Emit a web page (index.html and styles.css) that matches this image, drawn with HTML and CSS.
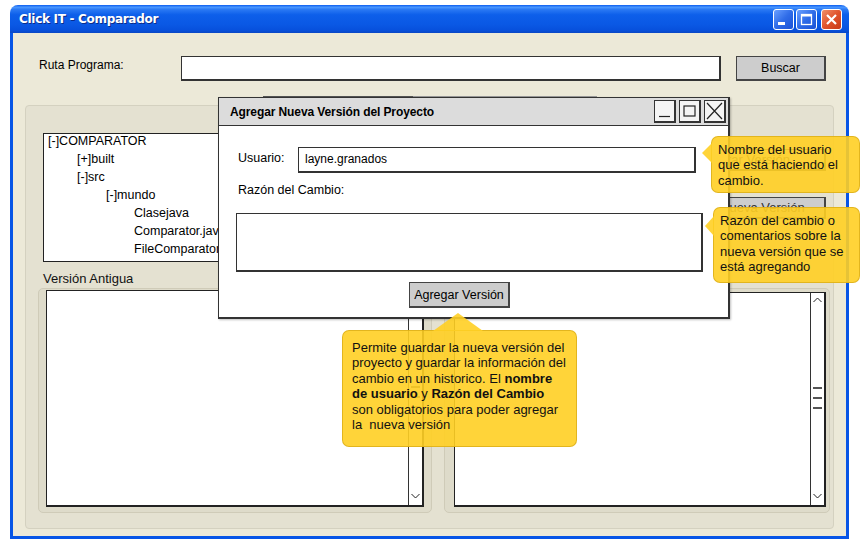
FILE: index.html
```html
<!DOCTYPE html>
<html lang="es">
<head>
    <meta charset="UTF-8">
    <title>Click IT - Comparador</title>
    <link rel="stylesheet" href="styles.css">
</head>
<body>
    <div class="window">
        <div class="titlebar">
            <span class="title">Click IT - Comparador</span>
            <div class="win-btns">
                <span class="wbtn">
                    <svg width="19" height="19" viewBox="0 0 19 19"><rect x="4" y="12" width="7" height="3" fill="#fff"/></svg>
                </span>
                <span class="wbtn">
                    <svg width="19" height="19" viewBox="0 0 19 19"><rect x="4.5" y="4.5" width="10" height="10" fill="none" stroke="#fff" stroke-width="1.3"/><rect x="4" y="4" width="11" height="2.5" fill="#fff"/></svg>
                </span>
                <span class="wbtn close">
                    <svg width="19" height="19" viewBox="0 0 19 19"><path d="M5 5 L14 14 M14 5 L5 14" stroke="#fff" stroke-width="2.2"/></svg>
                </span>
            </div>
        </div>

        <div class="client">
            <div class="path-row">
                <span class="path-label">Ruta Programa:</span>
                <div class="field path-input"></div>
                <button class="btn buscar">Buscar</button>
            </div>
            <div class="progress"><div class="progress-fill"></div></div>

            <div class="panel">
                <div class="top-row">
                    <div class="tree">
                        <ul>
                            <li class="lvl0">[-]COMPARATOR</li>
                            <li class="lvl1">[+]built</li>
                            <li class="lvl1">[-]src</li>
                            <li class="lvl2">[-]mundo</li>
                            <li class="lvl3">Clasejava</li>
                            <li class="lvl3">Comparator.java</li>
                            <li class="lvl3">FileComparator.java</li>
                        </ul>
                    </div>
                    <div class="actions">
                        <button class="btn action">Comparar Versión</button>
                        <button class="btn action">Agregar Nueva Versión</button>
                    </div>
                </div>

                <div class="versions">
                    <div class="version old">
                        <div class="version-label">Versión Antigua</div>
                        <div class="version-box">
                            <div class="text-area">
                                <div class="scrollbar">
                                    <svg width="13" height="10" viewBox="0 0 13 10"><polyline points="2.5,7 6.5,3 10.5,7"/></svg>
                                    <div class="thumb"><span></span><span></span><span></span></div>
                                    <svg width="13" height="10" viewBox="0 0 13 10"><polyline points="2.5,3 6.5,7 10.5,3"/></svg>
                                </div>
                            </div>
                        </div>
                    </div>
                    <div class="version new">
                        <div class="version-label">Versión Nueva</div>
                        <div class="version-box">
                            <div class="text-area">
                                <div class="scrollbar">
                                    <svg width="13" height="10" viewBox="0 0 13 10"><polyline points="2.5,7 6.5,3 10.5,7"/></svg>
                                    <div class="thumb"><span></span><span></span><span></span></div>
                                    <svg width="13" height="10" viewBox="0 0 13 10"><polyline points="2.5,3 6.5,7 10.5,3"/></svg>
                                </div>
                            </div>
                        </div>
                    </div>
                </div>
            </div>
        </div>
    </div>

    <!-- dialogo modal -->
    <div class="dialog">
        <div class="dialog-title">
            <span>Agregar Nueva Versión del Proyecto</span>
            <div class="dialog-btns">
                <span class="dbtn"><svg width="19" height="20" viewBox="0 0 19 20"><path d="M4 15.5 H15" stroke="#222" stroke-width="1.2"/></svg></span>
                <span class="dbtn"><svg width="19" height="20" viewBox="0 0 19 20"><rect x="4" y="5" width="11" height="10" fill="none" stroke="#222" stroke-width="1.2"/></svg></span>
                <span class="dbtn"><svg width="19" height="20" viewBox="0 0 19 20"><path d="M2 2 L17 18 M17 2 L2 18" stroke="#222" stroke-width="1.2"/></svg></span>
            </div>
        </div>
        <div class="dialog-body">
            <div class="user-row">
                <span class="dlabel">Usuario:</span>
                <div class="field user-input">layne.granados</div>
            </div>
            <div class="dlabel reason-label">Razón del Cambio:</div>
            <div class="field reason-input"></div>
            <button class="btn add-btn">Agregar Versión</button>
        </div>
    </div>

    <!-- notas -->
    <div class="note note-user">Nombre del usuario<br>que está haciendo el<br>cambio.</div>
    <div class="note note-reason">Razón del cambio o<br>comentarios sobre la<br>nueva versión que se<br>está agregando</div>
    <div class="note note-save">Permite guardar la nueva versión del<br>proyecto y guardar la información del<br>cambio en un historico. El <b>nombre</b><br><b>de usuario</b> y <b>Razón del Cambio</b><br>son obligatorios para poder agregar<br>la &nbsp;nueva versión</div>
</body>
</html>
```

FILE: styles.css
```css
body {
    margin: 0;
    padding: 5px 0 0 10px;
    background-color: #fff;
    font-family: "Liberation Sans", Arial, sans-serif;
    color: #000;
}

.window {
    width: 839px;
    height: 534px;
    display: flex;
    flex-direction: column;
}

.titlebar {
    height: 28px;
    flex-shrink: 0;
    display: flex;
    align-items: center;
    justify-content: space-between;
    padding: 0 7px 0 9px;
    border-radius: 8px 8px 0 0;
    background: linear-gradient(to bottom, #0a5cee 0%, #4a97ff 8%, #2a79f4 16%, #0d5fea 35%, #0a58e4 70%, #0750dc 90%, #0a47c4 100%);
}

.title {
    color: #fff;
    font-family: "DejaVu Sans", sans-serif;
    font-weight: bold;
    font-size: 12px;
    letter-spacing: -0.3px;
    text-shadow: 1px 1px 0 #0a2d8a;
}

.win-btns {
    display: flex;
    gap: 2px;
}

.wbtn {
    width: 19px;
    height: 19px;
    border: 1px solid #fff;
    border-radius: 3px;
    background: linear-gradient(135deg, #6aa0ff 0%, #2f6ce8 50%, #1b52d6 100%);
    display: block;
}

.wbtn svg {
    display: block;
}

.wbtn.close {
    margin-left: 2px;
    background: linear-gradient(135deg, #f0906a 0%, #e0542c 50%, #c83a18 100%);
}

.client {
    flex-grow: 1;
    background-color: #ece9d8;
    border: 3px solid #0755e6;
    border-top: none;
    display: flex;
    flex-direction: column;
}

.path-row {
    display: flex;
    align-items: flex-start;
    padding: 23px 20px 0 26px;
}

.path-label {
    width: 142px;
    font-size: 12px;
    line-height: 18px;
}

.field {
    background-color: #fff;
    border: 1px solid #333;
    border-right-width: 2px;
    border-bottom-width: 2px;
    box-sizing: border-box;
}

.path-input {
    width: 540px;
    height: 25px;
}

.btn {
    font-family: "Liberation Sans", Arial, sans-serif;
    font-size: 12.5px;
    color: #000;
    background-color: #cdcdcd;
    border: 1px solid #444;
    border-right-width: 2px;
    border-bottom-width: 2px;
    box-sizing: border-box;
    padding: 0;
    white-space: nowrap;
}

.buscar {
    width: 90px;
    height: 25px;
    margin-left: 15px;
}

.progress {
    width: 334px;
    height: 8px;
    margin: 15px 0 0 250px;
    background-color: #f2f2f2;
    border-top: 2px solid #999;
    box-sizing: border-box;
}

.progress-fill {
    width: 150px;
    height: 100%;
    border-top: 1px solid #555;
    margin-top: -2px;
}

.panel {
    margin: 1px 12px 7px 12px;
    flex-grow: 1;
    background-color: #e4e1d1;
    border: 1px solid #d4d1c0;
    border-radius: 4px;
    padding: 27px 3px 15px 12px;
    box-sizing: border-box;
}

.top-row {
    display: flex;
    height: 129px;
}

.tree {
    width: 380px;
    margin-left: 5px;
    background-color: #fff;
    border: 1px solid #222;
    box-sizing: border-box;
    font-size: 12.5px;
    overflow: hidden;
}

.tree ul {
    list-style: none;
    margin: -2px 0 0 0;
    padding: 0 0 0 4px;
}

.tree li {
    line-height: 18px;
    white-space: nowrap;
}

.lvl1 { padding-left: 29px; }
.lvl2 { padding-left: 58px; }
.lvl3 { padding-left: 86px; }

.actions {
    margin-left: auto;
    margin-right: 4px;
    padding-top: 16px;
    display: flex;
    flex-direction: column;
    align-items: flex-end;
    gap: 26px;
}

.action {
    width: 176px;
    height: 22px;
    font-size: 13px;
    color: #333;
}

.actions .action:first-child {
    background-color: #e8e6da;
}

.versions {
    display: flex;
    gap: 12px;
    margin-top: 8px;
}

.version-label {
    font-size: 13px;
    line-height: 18px;
    padding-left: 5px;
    color: #111;
}

.version-box {
    height: 225px;
    background-color: #dedbca;
    border: 1px solid #cfcbb8;
    border-radius: 5px;
    box-sizing: border-box;
}

.old .version-box {
    width: 394px;
    padding: 1px 7px 5px 7px;
}

.new .version-box {
    width: 386px;
    padding: 3px 3px 5px 9px;
}

.text-area {
    height: 100%;
    background-color: #fff;
    border: 1px solid #222;
    border-right-width: 2px;
    border-bottom-width: 2px;
    box-sizing: border-box;
    display: flex;
    justify-content: flex-end;
}

.scrollbar {
    width: 13px;
    border-left: 1px solid #333;
    display: flex;
    flex-direction: column;
    justify-content: space-between;
    align-items: center;
    padding: 2px 0 4px;
}

.scrollbar svg polyline {
    fill: none;
    stroke: #222;
    stroke-width: 1;
}

.thumb {
    display: flex;
    flex-direction: column;
    gap: 8px;
}

.thumb span {
    display: block;
    width: 9px;
    height: 2px;
    background-color: #555;
}

/* dialogo */
.dialog {
    position: absolute;
    left: 218px;
    top: 97px;
    width: 512px;
    height: 222px;
    background-color: #fff;
    border: 1px solid #333;
    border-right-width: 2px;
    border-bottom-width: 2px;
    box-sizing: border-box;
    box-shadow: 1px 1px 2px rgba(0, 0, 0, 0.25);
}

.dialog-title {
    height: 28px;
    background-color: #dcdcdc;
    border-bottom: 1px solid #333;
    box-sizing: border-box;
    display: flex;
    align-items: center;
    justify-content: space-between;
    padding: 0 2px 0 11px;
    font-size: 12px;
    font-weight: bold;
    letter-spacing: -0.1px;
}

.dialog-btns {
    display: flex;
    gap: 3px;
}

.dbtn {
    width: 19px;
    height: 20px;
    border: 1px solid #333;
    border-right-width: 2px;
    border-bottom-width: 2px;
    background-color: #f4f4f4;
    display: block;
}

.dbtn svg {
    display: block;
}

.dialog-body {
    padding: 21px 0 0 17px;
    font-size: 12.5px;
}

.user-row {
    display: flex;
    align-items: flex-start;
}

.dlabel {
    line-height: 20px;
    padding-left: 2px;
}

.user-row .dlabel {
    width: 60px;
    padding-top: 1px;
}

.user-input {
    width: 398px;
    height: 26px;
    line-height: 23px;
    padding-left: 6px;
    font-size: 12px;
}

.reason-label {
    margin-top: 7px;
}

.reason-input {
    width: 467px;
    height: 59px;
    margin-top: 13px;
}

.add-btn {
    width: 101px;
    height: 26px;
    margin: 10px 0 0 173px;
}

/* notas amarillas */
.note {
    position: absolute;
    box-sizing: border-box;
    background-color: rgba(255, 207, 36, 0.9);
    border: 1px solid rgba(214, 168, 20, 0.7);
    border-radius: 7px;
    font-size: 13px;
    line-height: 15.4px;
    color: #111;
    white-space: nowrap;
}

.note::before {
    content: "";
    position: absolute;
    background-color: rgba(255, 207, 36, 0.9);
}

.note-user {
    left: 711px;
    top: 136px;
    width: 149px;
    height: 57px;
    padding: 5px 0 0 6px;
}

.note-user::before {
    left: -10px;
    top: 6px;
    width: 10px;
    height: 20px;
    clip-path: polygon(100% 0, 0 50%, 100% 100%);
}

.note-reason {
    left: 713px;
    top: 207px;
    width: 147px;
    height: 76px;
    padding: 5px 0 0 6px;
}

.note-reason::before {
    left: -9px;
    top: 8px;
    width: 9px;
    height: 20px;
    clip-path: polygon(100% 0, 0 50%, 100% 100%);
}

.note-save {
    left: 342px;
    top: 330px;
    width: 235px;
    height: 117px;
    padding: 9px 0 0 9px;
}

.note-save::before {
    left: 90px;
    top: -18px;
    width: 50px;
    height: 18px;
    clip-path: polygon(0 100%, 50% 0, 100% 100%);
}
```
